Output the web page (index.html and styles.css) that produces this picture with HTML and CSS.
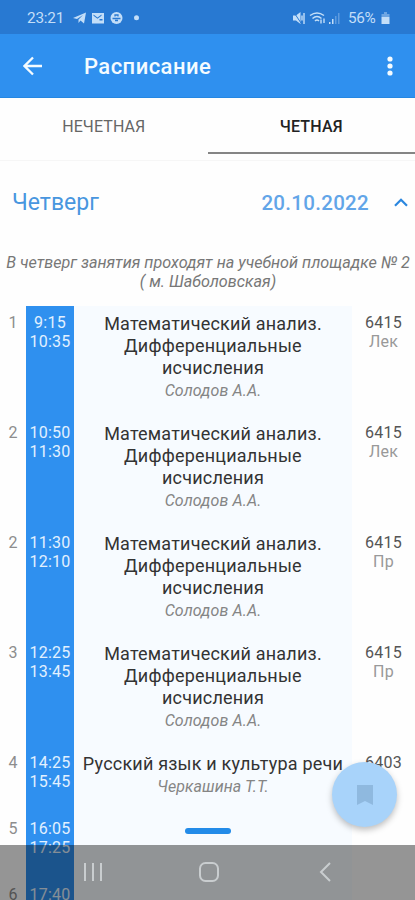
FILE: index.html
```html
<!DOCTYPE html>
<html lang="ru">
<head>
<meta charset="utf-8">
<title>Расписание</title>
<link rel="stylesheet" href="styles.css">
</head>
<body>
<div class="screen">
  <div class="status">
    <span class="clock">23:21</span>
    <svg class="notif" width="68" height="14" viewBox="0 0 68 14" fill="currentColor">
      <path d="M0 7 13 1.500 11 12.500 7.500 9.500 5.500 12V8.500L10 4 4 8z"/>
      <path fill-rule="evenodd" d="M19 2h12v10.500h-12zM20.500 3.500v1.300l4 3 4-3V3.500l-4 3zM26.500 9.500h3V8h-3z"/>
      <circle cx="43.500" cy="7" r="6"/>
      <path d="M39.500 7.500h8M42 9.500h3M42 5.500V4h3v1.500" stroke="#2879d2" stroke-width="1.300" fill="none"/>
      <circle cx="63.500" cy="6.700" r="2.500"/>
    </svg>
    <svg class="signal" width="48" height="14" viewBox="0 0 48 14" fill="currentColor">
      <path d="M0 4.500h3L7.500 1v12L3 9.500H0z"/>
      <path d="M1 1.500l7 10.500" stroke="#2879d2" stroke-width="1"/>
      <path d="M11 2v11M9 4.500v5" stroke="currentColor" stroke-width="1.400"/>
      <g fill="none" stroke="currentColor" stroke-width="1.500"><path d="M17 4.500q7-5 14 0M19.500 7.500q4.500-4 9 0M22 10q2-2 4 0"/><path d="M28 8.500v4M31 7.500v4.500" stroke-width="1.400"/></g>
      <path d="M36 11h1.500v2H36zM39 8h1.500v5H39z"/>
      <path d="M42 5h1.500v8H42zM45 2h1.500v11H45z" opacity=".35"/>
    </svg>
    <span class="percent">56%</span>
    <svg class="battery" width="9" height="13" viewBox="0 0 9 13" fill="currentColor"><path d="M3 0h3v2h2.500v3H.500V2H3z" opacity=".45"/><path d="M.500 5h8v7h-8z"/></svg>
  </div>
  <header class="bar">
    <svg class="back" width="20" height="20" viewBox="0 0 20 20"><path d="M19 10H2M10 1.500 1.500 10l8.500 8.500" fill="none" stroke="currentColor" stroke-width="2.300"/></svg>
    <h1>Расписание</h1>
    <svg class="more" width="6" height="20" viewBox="0 0 6 20" fill="currentColor"><circle cx="3" cy="3" r="2.600"/><circle cx="3" cy="10" r="2.600"/><circle cx="3" cy="17" r="2.600"/></svg>
  </header>
  <nav class="tabs">
    <div class="tab">НЕЧЕТНАЯ</div>
    <div class="tab active">ЧЕТНАЯ</div>
  </nav>
  <div class="day">
    <span class="weekday">Четверг</span>
    <span class="date">20.10.2022</span>
    <svg width="14" height="9" viewBox="0 0 14 9"><path d="M1 7.700l6-6 6 6" fill="none" stroke="currentColor" stroke-width="2.200"/></svg>
  </div>
  <p class="note">В четверг занятия проходят на учебной площадке № 2<br>( м. Шаболовская)</p>
  <main class="lessons">
    <div class="row"><span class="num">1</span><div class="time">9:15<br>10:35</div><div class="subject">Математический анализ.<br>Дифференциальные<br>исчисления<em>Солодов А.А.</em></div><div class="room">6415<small>Лек</small></div></div>
    <div class="row"><span class="num">2</span><div class="time">10:50<br>11:30</div><div class="subject">Математический анализ.<br>Дифференциальные<br>исчисления<em>Солодов А.А.</em></div><div class="room">6415<small>Лек</small></div></div>
    <div class="row"><span class="num">2</span><div class="time">11:30<br>12:10</div><div class="subject">Математический анализ.<br>Дифференциальные<br>исчисления<em>Солодов А.А.</em></div><div class="room">6415<small>Пр</small></div></div>
    <div class="row"><span class="num">3</span><div class="time">12:25<br>13:45</div><div class="subject">Математический анализ.<br>Дифференциальные<br>исчисления<em>Солодов А.А.</em></div><div class="room">6415<small>Пр</small></div></div>
    <div class="row short"><span class="num">4</span><div class="time">14:25<br>15:45</div><div class="subject">Русский язык и культура речи<em>Черкашина Т.Т.</em></div><div class="room">6403</div></div>
    <div class="row short"><span class="num">5</span><div class="time">16:05<br>17:25</div><div class="subject"><i class="dash"></i></div><div class="room"></div></div>
    <div class="row short"><span class="num">6</span><div class="time">17:40</div><div class="subject"></div><div class="room"></div></div>
  </main>
  <div class="fab"><svg width="16" height="20" viewBox="0 0 16 20"><path d="M0 0h16v20l-8-4-8 4z" fill="currentColor"/></svg></div>
  <div class="navbar">
    <svg width="20" height="20" viewBox="0 0 20 20"><path d="M2 1v18M10 1v18M18 1v18"/></svg>
    <svg width="20" height="20" viewBox="0 0 20 20"><rect x="1" y="1" width="18" height="18" rx="5.500"/></svg>
    <svg width="20" height="20" viewBox="0 0 20 20"><path d="M15 1 6 10l9 9"/></svg>
  </div>
</div>
</body>
</html>
```
FILE: styles.css
```css
* { box-sizing: border-box; }
body { margin: 0; font-family: Roboto, "Noto Sans", sans-serif; background: #fefefe; }
.screen { position: relative; width: 415px; height: 900px; overflow: hidden; }
svg { display: block; flex: none; }

.status { display: flex; align-items: center; height: 34px; padding: 2px 25px 0 27px; background: #2879d2; color: #c3def8; font-size: 15.300px; }
.clock { width: 46px; letter-spacing: -.2px; }
.signal { margin-left: auto; }
.percent { width: 29px; margin: 0 4px 0 7px; letter-spacing: -.3px; }

.bar { display: flex; align-items: center; height: 64px; padding: 0 22px 0 23px; background: #2f90ef; color: #f4fbff; border-bottom: 1px solid #2587e2; }
.bar h1 { flex: 1; margin: 2px 0 0 41px; font-size: 22px; font-weight: 500; letter-spacing: .45px; }

.tabs { display: flex; height: 63px; border-bottom: 1px solid #f6f6f6; }
.tab { flex: 1; height: 56px; font-size: 16px; line-height: 58px; text-align: center; color: #666; letter-spacing: .1px; }
.active { color: #222; font-weight: 500; border-bottom: 2px solid #858585; letter-spacing: .2px; }

.day { display: flex; align-items: center; height: 83px; padding: 0 7px 0 12px; color: #2b87df; }
.weekday { flex: 1; font-size: 23px; color: #4896df; }
.date { margin-right: 25px; font-size: 20.500px; font-weight: 500; letter-spacing: .3px; color: #62a5e8; }

.note { height: 62px; margin: 0; padding: 9px 0 0 1px; font-size: 16.200px; line-height: 19px; font-style: italic; text-align: center; white-space: nowrap; color: #777; }

.row { display: grid; grid-template-columns: 26px 48px 278px 63px; height: 110px; }
.short { height: 66px; }
.num { padding-top: 7px; font-size: 16px; line-height: 19px; text-align: center; color: #8d8d8d; }
.time { padding-top: 7px; background: #2f90ef; color: #e2f1ff; font-size: 16px; line-height: 19px; letter-spacing: .25px; text-align: center; }
.subject { padding-top: 7px; background: #f7fbff; color: #333; font-size: 18px; letter-spacing: .2px; line-height: 22px; text-align: center; white-space: nowrap; }
.subject em { display: block; padding-top: 1px; font-size: 16px; letter-spacing: .1px; color: #858585; }
.dash { display: block; width: 46px; height: 6px; margin: 9px 0 0 111px; border-radius: 3px; background: #238be8; }
.room { padding-top: 7px; font-size: 16px; line-height: 19px; letter-spacing: .2px; color: #555; text-align: center; }
.room small { display: block; font-size: 16px; color: #999; }

.fab { position: absolute; left: 332px; top: 762px; display: flex; align-items: center; justify-content: center; width: 65px; height: 65px; border-radius: 50%; background: #a8d3fa; color: #8fb9df; box-shadow: 0 3px 6px rgba(0, 0, 0, .25); }
.navbar { position: absolute; left: 0; right: 0; bottom: 0; display: flex; align-items: center; justify-content: space-between; height: 55px; padding: 0 80px 2px 83px; background: rgba(0, 0, 0, .41); }
.navbar svg { fill: none; stroke: #c9cdcf; stroke-width: 2; }
```
